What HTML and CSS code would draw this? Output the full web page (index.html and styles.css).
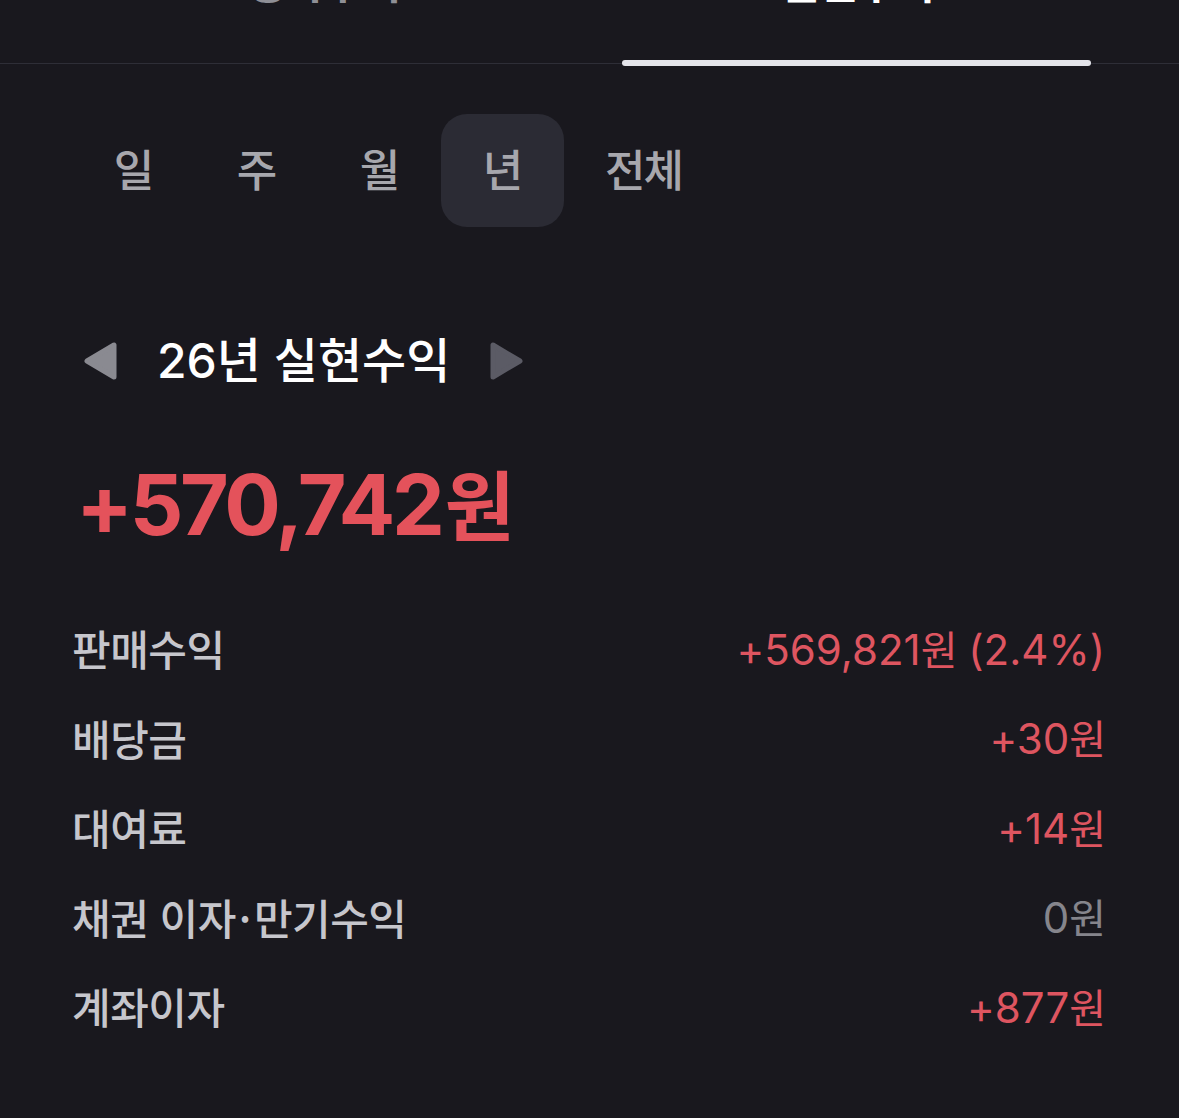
FILE: index.html
```html
<!DOCTYPE html>
<html lang="ko">
<head>
<meta charset="utf-8">
<title>실현수익</title>
<link rel="stylesheet" href="styles.css">
</head>
<body>
<div class="screen">
  <div class="top-tabs">
    <div class="top-tab">
      <span class="top-tab-label">평가수익</span>
    </div>
    <div class="top-tab top-tab--active">
      <span class="top-tab-label">실현수익</span>
      <span class="top-tab-bar"></span>
    </div>
  </div>

  <div class="period-tabs">
    <span class="period-tab">일</span>
    <span class="period-tab">주</span>
    <span class="period-tab">월</span>
    <span class="period-tab period-tab--active">년</span>
    <span class="period-tab">전체</span>
  </div>

  <div class="period-header">
    <svg class="arrow arrow--prev" width="34" height="38" viewBox="0 0 34 38" aria-hidden="true">
      <polygon points="30,3 30,35 3,19" fill="#8a8a91" stroke="#8a8a91" stroke-width="5" stroke-linejoin="round"/>
    </svg>
    <span class="period-title">26년 실현수익</span>
    <svg class="arrow arrow--next" width="34" height="38" viewBox="0 0 34 38" aria-hidden="true">
      <polygon points="4,3 4,35 31,19" fill="#5b5b65" stroke="#5b5b65" stroke-width="5" stroke-linejoin="round"/>
    </svg>
  </div>

  <div class="total">+570,742<span class="won">원</span></div>

  <div class="rows">
    <div class="row">
      <span class="row-label">판매수익</span>
      <span class="row-value row-value--up">+569,821<span class="won">원</span> (2.4%)</span>
    </div>
    <div class="row">
      <span class="row-label">배당금</span>
      <span class="row-value row-value--up">+30<span class="won">원</span></span>
    </div>
    <div class="row">
      <span class="row-label">대여료</span>
      <span class="row-value row-value--up">+14<span class="won">원</span></span>
    </div>
    <div class="row">
      <span class="row-label">채권 이자<span class="dot">·</span>만기수익</span>
      <span class="row-value row-value--zero">0<span class="won">원</span></span>
    </div>
    <div class="row">
      <span class="row-label">계좌이자</span>
      <span class="row-value row-value--up">+877<span class="won">원</span></span>
    </div>
  </div>
</div>
</body>
</html>
```

FILE: styles.css
```css
html, body {
  margin: 0;
  padding: 0;
  background: #19181e;
}

body {
  font-family: Inter, "Noto Sans CJK KR", sans-serif;
  color: #ffffff;
  overflow: hidden;
}

.screen {
  width: 1179px;
  height: 1118px;
  background: #19181e;
  overflow: hidden;
}

/* top segmented tabs (cut off by the top edge) */
.top-tabs {
  display: flex;
  height: 64px;
  box-sizing: border-box;
  padding: 0 56px;
  border-bottom: 1px solid #2e2e37;
}

.top-tab {
  flex: 1;
  display: flex;
  flex-direction: column;
  justify-content: space-between;
  align-items: center;
  padding: 0 32px;
}

.top-tab-label {
  margin-top: -42px;
  font-family: "Noto Sans CJK KR", sans-serif;
  font-size: 44px;
  line-height: 44px;
  font-weight: 600;
  color: #8f8f96;
  letter-spacing: -2px;
}

.top-tab--active .top-tab-label {
  color: #ffffff;
}

.top-tab-bar {
  display: block;
  width: 100%;
  height: 6px;
  border-radius: 3px;
  background: #e4e4ea;
  margin-bottom: -3px;
  position: relative;
  z-index: 1;
}

/* period tabs */
.period-tabs {
  display: flex;
  margin-top: 50px;
  padding-left: 71.5px;
  height: 113px;
}

.period-tab {
  display: flex;
  align-items: center;
  justify-content: center;
  min-width: 40px;
  padding: 0 41.5px 5px;
  border-radius: 26px;
  font-family: "Noto Sans CJK KR", sans-serif;
  font-size: 44px;
  font-weight: 500;
  color: #a7a7ad;
  letter-spacing: -2px;
}

.period-tab--active {
  background: #2b2b34;
}

/* period header */
.period-header {
  display: flex;
  align-items: center;
  gap: 39px;
  height: 70px;
  margin-top: 99px;
  padding-left: 84px;
}

.arrow {
  display: block;
}

.period-title {
  font-size: 48px;
  font-weight: 500;
  color: #ffffff;
  letter-spacing: 0;
  line-height: 70px;
}

/* total */
.total {
  margin-top: 56px;
  padding-left: 76px;
  height: 100px;
  line-height: 100px;
  font-size: 84px;
  font-weight: 700;
  color: #e4525b;
  letter-spacing: -3.3px;
}

.total .won {
  font-family: "Noto Sans CJK KR", sans-serif;
  font-weight: 700;
  font-size: 76px;
  margin-left: 3px;
  letter-spacing: 0;
}

/* rows */
.rows {
  margin-top: 51px;
  padding: 0 74px 0 72px;
}

.row {
  display: flex;
  justify-content: space-between;
  align-items: center;
  height: 89.5px;
}

.row-label {
  font-family: "Noto Sans CJK KR", sans-serif;
  font-size: 42px;
  font-weight: 500;
  color: #c6c6cc;
  letter-spacing: -0.5px;
}

.row-label .dot {
  margin: 0 3px;
}

.row-value {
  font-size: 42px;
  font-weight: 400;
  letter-spacing: 0;
}

.row-value .won {
  font-family: "Noto Sans CJK KR", sans-serif;
  font-size: 40px;
  letter-spacing: -1px;
}

.row-value--up {
  color: #de5560;
}

.row-value--zero {
  color: #85858c;
}
```
